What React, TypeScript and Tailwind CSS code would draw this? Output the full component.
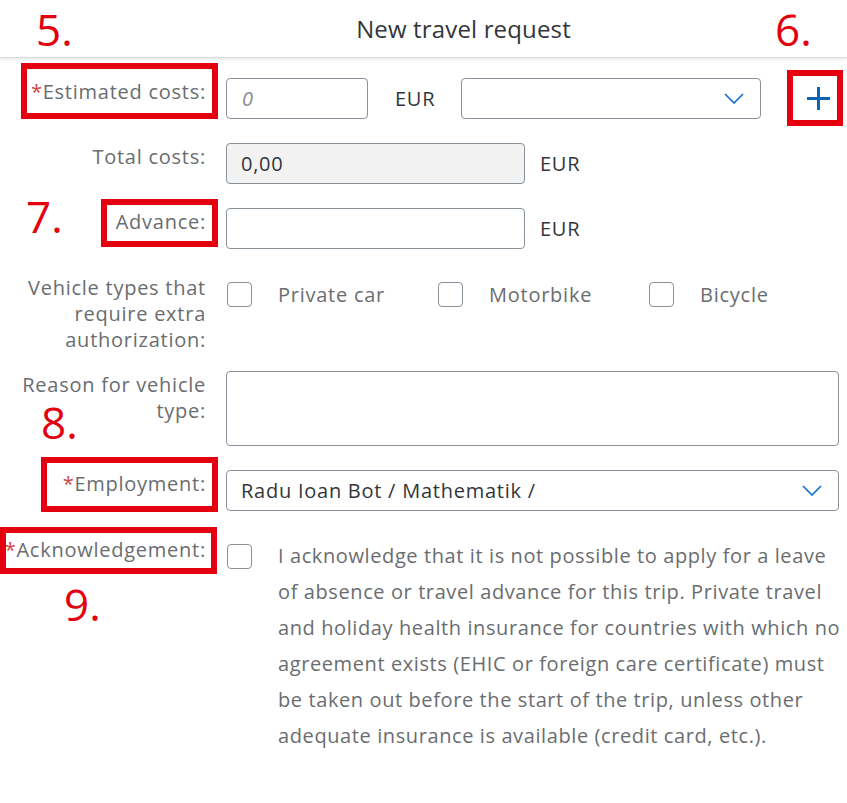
import React from "react";

const Chevron: React.FC = () => (
  <svg width="20" height="11" viewBox="0 0 20 11" fill="none" className="shrink-0">
    <path d="M1 1 L10 10 L19 1" stroke="#0a6ed1" strokeWidth="1.6" />
  </svg>
);

const Box: React.FC = () => (
  <span className="block w-[25px] h-[25px] rounded-[4px] border border-[#89919a] bg-white shrink-0" />
);

const Label: React.FC<{ req?: boolean; children: React.ReactNode }> = ({ req, children }) => (
  <div className="w-[206px] shrink-0 text-right text-[20px] leading-[26px] pt-[1px] text-[#6a6d70]">
    {req && <span className="text-[#d04343]">*</span>}
    {children}
  </div>
);

const App: React.FC = () => {
  const vehicles = ["Private car", "Motorbike", "Bicycle"];

  return (
    <div className="relative w-[847px] h-[803px] bg-white overflow-hidden font-['Open_Sans',sans-serif] tracking-[0.75px]">
      {/* Header */}
      <div className="h-[58px] flex items-center justify-center border-b border-[#d9d9d9] shadow-[0_2px_3px_rgba(0,0,0,0.08)]">
        <h1 className="text-[24px] text-[#32363a] pl-[80px] tracking-[0.15px]">New travel request</h1>
      </div>

      {/* Form */}
      <div className="pt-[20px]">
        {/* Estimated costs */}
        <div className="flex">
          <Label req>Estimated costs:</Label>
          <div className="ml-[20px] flex items-center h-[41px] shrink-0">
            <div className="w-[142px] h-[41px] shrink-0 rounded-[4px] border border-[#89919a] flex items-center pl-[15px] text-[20px] italic text-[#8c8f92]">
              0
            </div>
            <span className="ml-[27px] w-[42px] shrink-0 text-[20px] text-[#32363a]">EUR</span>
            <div className="ml-[24px] w-[300px] h-[41px] shrink-0 rounded-[4px] border border-[#89919a] flex items-center justify-end pr-[16px]">
              <Chevron />
            </div>
            <button className="ml-[39px] w-[36px] h-[41px] shrink-0 flex items-center justify-center">
              <svg width="25" height="25" viewBox="0 0 25 25" className="shrink-0">
                <path d="M12.5 1 V24 M1 12.5 H24" stroke="#0a64b4" strokeWidth="3" />
              </svg>
            </button>
          </div>
        </div>

        {/* Total costs */}
        <div className="flex mt-[24px]">
          <Label>Total costs:</Label>
          <div className="ml-[20px] flex items-center">
            <div className="w-[299px] h-[41px] rounded-[4px] border border-[#89919a] bg-[#f2f2f2] flex items-center pl-[14px] text-[20px] text-[#32363a]">
              0,00
            </div>
            <span className="ml-[15px] text-[20px] text-[#32363a]">EUR</span>
          </div>
        </div>

        {/* Advance */}
        <div className="flex mt-[24px]">
          <Label>Advance:</Label>
          <div className="ml-[20px] flex items-center">
            <div className="w-[299px] h-[41px] rounded-[4px] border border-[#89919a]" />
            <span className="ml-[15px] text-[20px] text-[#32363a]">EUR</span>
          </div>
        </div>

        {/* Vehicle types */}
        <div className="flex mt-[25px]">
          <Label>Vehicle types that require extra authorization:</Label>
          <div className="ml-[21px] flex h-[41px] items-center">
            {vehicles.map((v) => (
              <label key={v} className="w-[211px] flex items-center">
                <Box />
                <span className="ml-[26px] text-[20px] text-[#6a6d70]">{v}</span>
              </label>
            ))}
          </div>
        </div>

        {/* Reason */}
        <div className="flex mt-[18px]">
          <Label>Reason for vehicle type:</Label>
          <div className="ml-[20px] w-[613px] h-[75px] rounded-[4px] border border-[#89919a]" />
        </div>

        {/* Employment */}
        <div className="flex mt-[24px]">
          <Label req>Employment:</Label>
          <div className="ml-[20px] w-[613px] h-[41px] rounded-[4px] border border-[#89919a] flex items-center justify-between pl-[14px] pr-[16px]">
            <span className="text-[20px] text-[#32363a]">Radu Ioan Bot / Mathematik /</span>
            <Chevron />
          </div>
        </div>

        {/* Acknowledgement */}
        <div className="flex mt-[25px]">
          <Label req>Acknowledgement:</Label>
          <div className="ml-[21px] flex">
            <div className="h-[41px] flex items-center">
              <Box />
            </div>
            <p className="ml-[26px] mt-[2px] w-[568px] text-[20px] leading-[36px] tracking-[0.6px] text-[#6a6d70]">
              I acknowledge that it is not possible to apply for a leave of absence or travel advance
              for this trip. Private travel and holiday health insurance for countries with which no
              agreement exists (EHIC or foreign care certificate) must be taken out before the start
              of the trip, unless other adequate insurance is available (credit card, etc.).
            </p>
          </div>
        </div>
      </div>

      {/* Annotations */}
      <span className="absolute left-[36px] top-[7px] text-[44px] leading-none tracking-normal text-[#e3000f]">5.</span>
      <span className="absolute left-[775px] top-[7px] text-[44px] leading-none tracking-normal text-[#e3000f]">6.</span>
      <span className="absolute left-[26px] top-[194px] text-[44px] leading-none tracking-normal text-[#e3000f]">7.</span>
      <span className="absolute left-[41px] top-[400px] text-[44px] leading-none tracking-normal text-[#e3000f]">8.</span>
      <span className="absolute left-[64px] top-[582px] text-[44px] leading-none tracking-normal text-[#e3000f]">9.</span>

      <div className="absolute left-[21px] top-[63px] w-[197px] h-[56px] border-[6px] border-[#e3000f]" />
      <div className="absolute left-[787px] top-[70px] w-[56px] h-[56px] border-[6px] border-[#e3000f]" />
      <div className="absolute left-[101px] top-[199px] w-[117px] h-[48px] border-[6px] border-[#e3000f]" />
      <div className="absolute left-[41px] top-[457px] w-[177px] h-[55px] border-[6px] border-[#e3000f]" />
      <div className="absolute left-0 top-[527px] w-[217px] h-[47px] border-[6px] border-[#e3000f]" />
    </div>
  );
};

export default App;
